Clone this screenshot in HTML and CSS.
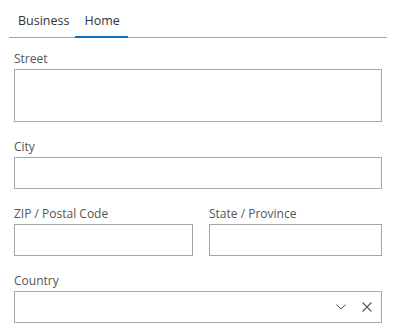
FILE: index.html
```html
<!DOCTYPE html>
<html lang="en">
<head>
  <meta charset="UTF-8" />
  <meta name="viewport" content="width=device-width, initial-scale=1.0" />
  <title>Address</title>
  <link rel="stylesheet" href="styles.css">
</head>
<body>
  <div class="tabs">
    <button type="button" class="tab">Business</button>
    <button type="button" class="tab active">Home</button>
  </div>

  <form class="address">
    <div class="field">
      <label for="street">Street</label>
      <textarea id="street" class="street"></textarea>
    </div>

    <div class="field">
      <label for="city">City</label>
      <input type="text" id="city">
    </div>

    <div class="row">
      <div class="field">
        <label for="zip">ZIP / Postal Code</label>
        <input type="text" id="zip">
      </div>
      <div class="field">
        <label for="state">State / Province</label>
        <input type="text" id="state">
      </div>
    </div>

    <div class="field">
      <label for="country">Country</label>
      <div class="combo">
        <input type="text" id="country">
        <span class="combo-icon">
          <svg width="10" height="6" viewBox="0 0 10 6"><polyline points="0.5,0.5 5,5 9.5,0.5" fill="none" stroke="#555" stroke-width="1"/></svg>
        </span>
        <span class="combo-icon">
          <svg width="10" height="10" viewBox="0 0 10 10"><path d="M0.5 0.5 L9.5 9.5 M9.5 0.5 L0.5 9.5" fill="none" stroke="#555" stroke-width="1.1"/></svg>
        </span>
      </div>
    </div>
  </form>
</body>
</html>
```

FILE: styles.css
```css
body {
  margin: 0;
  font-family: 'Open Sans', 'Segoe UI', sans-serif;
  background: #fff;
  color: #333;
}

.tabs {
  display: flex;
  margin: 0 8px 0 9px;
  border-bottom: 1px solid #a6a6a6;
}

.tab {
  font-family: inherit;
  font-size: 12.5px;
  color: #333;
  background: none;
  border: none;
  padding: 5px 6px 0 9px;
  height: 38px;
  line-height: 20px;
  margin-bottom: -1px;
  border-bottom: 2px solid transparent;
  cursor: pointer;
}

.tab.active {
  padding-right: 8px;
  border-bottom-color: #106ebe;
}

.address {
  padding: 13px 13px 0 14px;
  display: flex;
  flex-direction: column;
  gap: 17px;
}

.field {
  display: flex;
  flex-direction: column;
}

.field label {
  font-size: 12px;
  line-height: 16px;
  color: #555;
  margin-bottom: 2px;
}

.field input,
.field textarea {
  box-sizing: border-box;
  height: 32px;
  width: 100%;
  margin: 0;
  border: 1px solid #a6a6a6;
  font-family: inherit;
  font-size: 13px;
  padding: 0 8px;
  outline: none;
  resize: none;
}

.field textarea.street {
  height: 53px;
}

.row {
  display: grid;
  grid-template-columns: 179px 1fr;
  gap: 16px;
}

.combo {
  display: flex;
  align-items: center;
  height: 32px;
  box-sizing: border-box;
  border: 1px solid #a6a6a6;
  padding-right: 9px;
  gap: 16px;
}

.combo input {
  flex: 1;
  border: none;
  height: 30px;
}

.combo-icon {
  display: flex;
  align-items: center;
}
```
